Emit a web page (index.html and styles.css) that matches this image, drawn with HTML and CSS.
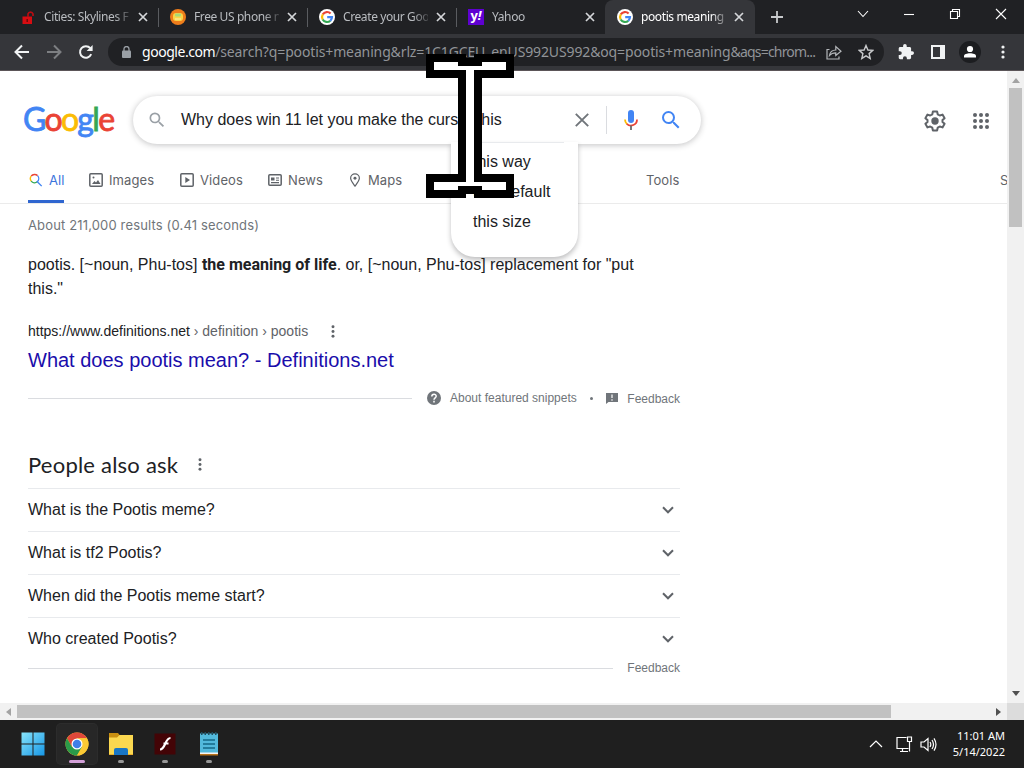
FILE: index.html
```html
<!DOCTYPE html>
<html lang="en">
<head>
    <meta charset="UTF-8">
    <meta name="viewport" content="width=device-width, initial-scale=1.0">
    <title>pootis meaning - Google Search</title>
    <link rel="stylesheet" href="styles.css">
</head>
<body>

<!-- Shared icons -->
<svg class="sprite" width="0" height="0">
    <symbol id="g" viewBox="0 0 16 16">
        <circle cx="8" cy="8" r="8" fill="#fff"/>
        <g fill="none" stroke-width="2.2">
            <path d="M3.8 5.4A5 5 0 0 1 11.6 4.5" stroke="#ea4335"/>
            <path d="M3.7 10.5A5 5 0 0 1 3.8 5.4" stroke="#fbbc05"/>
            <path d="M11.3 11.8A5 5 0 0 1 3.7 10.5" stroke="#34a853"/>
            <path d="M8.2 8.1H13A5 5 0 0 1 11.3 11.8" stroke="#4285f4"/>
        </g>
    </symbol>
    <symbol id="x" viewBox="0 0 10 10">
        <path d="M1 1L9 9M9 1L1 9" fill="none" stroke="currentColor" stroke-width="1.7"/>
    </symbol>
    <symbol id="lens" viewBox="0 0 24 24">
        <path fill="currentColor" d="M15.5 14h-.79l-.28-.27A6.47 6.47 0 0 0 16 9.5 6.5 6.5 0 1 0 9.5 16c1.61 0 3.09-.59 4.23-1.57l.27.28v.79l5 4.99L20.49 19l-4.99-5zm-6 0C7.01 14 5 11.99 5 9.5S7.01 5 9.5 5 14 7.01 14 9.5 11.99 14 9.5 14z"/>
    </symbol>
    <symbol id="dots" viewBox="0 0 4 14">
        <circle cx="2" cy="2" r="1.6" fill="currentColor"/>
        <circle cx="2" cy="7" r="1.6" fill="currentColor"/>
        <circle cx="2" cy="12" r="1.6" fill="currentColor"/>
    </symbol>
    <symbol id="chev" viewBox="0 0 12 8">
        <path d="M1 1.3L6 6.3L11 1.3" fill="none" stroke="currentColor" stroke-width="2"/>
    </symbol>
</svg>

<div class="screen">

    <!-- Tab strip -->
    <div class="tabs">
        <div class="tab tab-1">
            <svg class="fav" viewBox="0 0 16 16"><path d="M2.5 7.5H12V15H2.5Z" fill="#d80d12"/><path d="M8 8V5A2.6 2.6 0 0 1 13 5V7" fill="none" stroke="#b80d12" stroke-width="1.7"/><path d="M7.2 10V13" stroke="#6d0808" stroke-width="1.4"/></svg>
            <span class="tab-title">Cities: Skylines F</span>
            <svg class="close"><use href="#x"/></svg>
        </div>
        <div class="tab">
            <svg class="fav" viewBox="0 0 16 16"><circle cx="8" cy="8" r="8" fill="#ee7d1b"/><rect x="3" y="4" width="10" height="8" rx="3" fill="#f9d548"/><rect x="5" y="4.5" width="6" height="3" rx="1" fill="#a6d978"/><path d="M5 10H11" stroke="#fff1b0"/></svg>
            <span class="tab-title">Free US phone n</span>
            <svg class="close"><use href="#x"/></svg>
        </div>
        <div class="tab">
            <svg class="fav"><use href="#g"/></svg>
            <span class="tab-title">Create your Goo</span>
            <svg class="close"><use href="#x"/></svg>
        </div>
        <div class="tab tab-4">
            <span class="fav yahoo">y<i>!</i></span>
            <span class="tab-title">Yahoo</span>
            <svg class="close"><use href="#x"/></svg>
        </div>
        <div class="tab active">
            <svg class="fav"><use href="#g"/></svg>
            <span class="tab-title">pootis meaning</span>
            <svg class="close"><use href="#x"/></svg>
        </div>
        <svg class="new-tab" viewBox="0 0 12 12"><path d="M6 0V12M0 6H12" stroke="#c8cacc" stroke-width="1.8"/></svg>
        <div class="window-buttons">
            <svg width="12" height="12" viewBox="0 0 12 12"><path d="M1 3L6 8.5L11 3"/></svg>
            <svg width="12" height="12" viewBox="0 0 12 12"><path d="M1 6.5H11"/></svg>
            <svg width="12" height="12" viewBox="0 0 12 12"><path d="M1.5 3.5H8.5V10.5H1.5ZM3.5 3.5V1.5H10.5V8.5H8.5"/></svg>
            <svg width="12" height="12" viewBox="0 0 12 12"><path d="M1 1L11 11M11 1L1 11"/></svg>
        </div>
    </div>

    <!-- Toolbar -->
    <div class="toolbar">
        <svg class="nav-icon" viewBox="0 0 16 16"><path d="M15 8H2M8 1.5L1.5 8L8 14.5" fill="none" stroke="#f1f3f4" stroke-width="2"/></svg>
        <svg class="nav-icon" viewBox="0 0 16 16"><path d="M1 8H14M8 1.5L14.5 8L8 14.5" fill="none" stroke="#7d7f82" stroke-width="2"/></svg>
        <svg class="nav-icon" viewBox="0 0 16 16"><path d="M13.2 10.2A5.8 5.8 0 1 1 12.3 4.2" fill="none" stroke="#f1f3f4" stroke-width="2"/><path d="M14.6 1V7H8.6Z" fill="#f1f3f4"/></svg>
        <div class="address">
            <svg class="lock" viewBox="0 0 9 12"><rect y="4.5" width="9" height="7.5" rx="1" fill="#9aa0a6"/><path d="M2 5V3A2.5 2.5 0 0 1 7 3V5" fill="none" stroke="#9aa0a6" stroke-width="1.3"/></svg>
            <span class="url"><b>google.com</b>/search?q=pootis+meaning&amp;rlz=1C1GCEU_enUS992US992&amp;oq=pootis+meaning<span class="tail">&amp;aqs=chrom...</span></span>
            <svg class="share" viewBox="0 0 16 15"><path d="M3.5 4.5H1V14H13V11.5M3.5 10.5C4 7 6.5 5 9.8 5V1.5L15 6.2L9.8 10.5V7.8C7 7.8 5 8.6 3.5 10.5Z" fill="none" stroke="#b4b7ba" stroke-width="1.2"/></svg>
            <svg class="star" viewBox="0 0 16 16"><path d="M8 1.5L9.9 6L14.8 6.4L11.1 9.6L12.2 14.4L8 11.8L3.8 14.4L4.9 9.6L1.2 6.4L6.1 6Z" fill="none" stroke="#c8cacc" stroke-width="1.4"/></svg>
        </div>
        <svg class="ext" viewBox="1 1 22 22"><path fill="#f1f3f4" d="M20.5 11H19V7c0-1.1-.9-2-2-2h-4V3.5a2.5 2.5 0 0 0-5 0V5H4c-1.1 0-2 .9-2 2v3.8h1.5a2.7 2.7 0 0 1 0 5.4H2V20c0 1.1.9 2 2 2h3.8v-1.5a2.7 2.7 0 0 1 5.4 0V22H17c1.1 0 2-.9 2-2v-4h1.5a2.5 2.5 0 0 0 0-5z"/></svg>
        <svg class="panel" viewBox="0 0 14 14"><path d="M1 1H13V13H1Z" fill="none" stroke="#f1f3f4" stroke-width="2"/><path d="M9 1H13V13H9Z" fill="#f1f3f4"/></svg>
        <svg class="avatar" viewBox="0 0 22 22"><circle cx="11" cy="11" r="11" fill="#1c1d20"/><circle cx="11" cy="8" r="3.1" fill="#fff"/><path d="M5 16.5V15C5 11.3 17 11.3 17 15V16.5Z" fill="#fff"/></svg>
        <svg class="menu-dots"><use href="#dots"/></svg>
    </div>

    <!-- Page and scrollbars -->
    <div class="viewport">
        <div class="page">
            <div class="header">
                <div class="logo"><span class="blue">G</span><span class="red">o</span><span class="yellow">o</span><span class="blue">g</span><span class="green">l</span><span class="red">e</span></div>
                <div class="search">
                    <svg class="search-lens"><use href="#lens"/></svg>
                    <span class="query">Why does win 11 let you make the cursor this</span>
                    <svg class="clear" viewBox="0 0 14 14"><path d="M.8 .8L13.2 13.2M13.2 .8L.8 13.2" stroke="#70757a" stroke-width="1.9"/></svg>
                    <span class="sep"></span>
                    <svg class="mic" viewBox="0 0 14 20"><rect x="4" y="0" width="6" height="13" rx="3" fill="#4285f4"/><path d="M1 9.5A6 6 0 0 0 3 14" fill="none" stroke="#fbbc05" stroke-width="1.8"/><path d="M2.8 13.8A6 6 0 0 0 13 9.5" fill="none" stroke="#ea4335" stroke-width="1.8"/><path d="M7 15.5V20" stroke="#6b6b6b" stroke-width="1.8"/></svg>
                    <svg class="go"><use href="#lens"/></svg>
                    <div class="suggestions">
                        <div>this way</div>
                        <div>this default</div>
                        <div>this size</div>
                    </div>
                </div>
                <svg class="gear" viewBox="0 0 24 24"><path d="M9.9 2.5H14.1L14.7 5.3L16.8 6.5L19.5 5.6L21.6 9.2L19.5 11.1V12.9L21.6 14.8L19.5 18.4L16.8 17.5L14.7 18.7L14.1 21.5H9.9L9.3 18.7L7.2 17.5L4.5 18.4L2.4 14.8L4.5 12.9V11.1L2.4 9.2L4.5 5.6L7.2 6.5L9.3 5.3Z" fill="none" stroke="#5f6368" stroke-width="2" stroke-linejoin="round"/><circle cx="12" cy="12" r="3.7" fill="#5f6368"/></svg>
                <div class="apps"><i></i><i></i><i></i><i></i><i></i><i></i><i></i><i></i><i></i></div>
            </div>

            <div class="filters">
                <a class="filter all">
                    <svg viewBox="0 0 16 16"><g fill="none" stroke-width="1.6"><path d="M2.5 3.5A5 5 0 0 1 9.8 3" stroke="#ea4335"/><path d="M2.5 9.3A5 5 0 0 1 2.5 3.5" stroke="#fbbc05"/><path d="M9.5 10A5 5 0 0 1 2.5 9.3" stroke="#34a853"/><path d="M9.8 3A5 5 0 0 1 9.5 10L14.5 15" stroke="#4285f4"/></g></svg>All
                </a>
                <a class="filter images">
                    <svg viewBox="0 0 14 14"><rect x=".8" y=".8" width="12.4" height="12.4" rx="1" fill="none" stroke="currentColor" stroke-width="1.5"/><path d="M3 11L5.5 8L7 9.5L9 7L11.5 11Z" fill="currentColor"/><circle cx="4.5" cy="4.5" r="1" fill="currentColor"/></svg>Images
                </a>
                <a class="filter videos">
                    <svg viewBox="0 0 14 14"><rect x=".8" y=".8" width="12.4" height="12.4" rx="1" fill="none" stroke="currentColor" stroke-width="1.5"/><path d="M5.3 4L10 7L5.3 10Z" fill="currentColor"/></svg>Videos
                </a>
                <a class="filter news">
                    <svg viewBox="0 0 14 14"><rect x=".8" y="1.7" width="12.4" height="10.6" rx="1" fill="none" stroke="currentColor" stroke-width="1.5"/><path d="M3 4.500H6.5V7.500H3ZM8 4.500H11V5.500H8ZM8 6.700H11V7.700H8ZM3 9H11V10.200H3Z" fill="currentColor"/></svg>News
                </a>
                <a class="filter maps">
                    <svg viewBox="0 0 14 16"><path d="M7 15C4 11 2 8.5 2 6A5 5 0 0 1 12 6C12 8.5 10 11 7 15Z" fill="none" stroke="currentColor" stroke-width="1.4"/><circle cx="7" cy="6" r="1.7" fill="currentColor"/></svg>Maps
                </a>
                <a class="filter tools">Tools</a>
                <a class="filter safe">S</a>
            </div>

            <div class="results">
                <div class="stats">About 211,000 results (0.41 seconds)</div>
                <p class="snippet">pootis. [~noun, Phu-tos] <b>the meaning of life</b>. or, [~noun, Phu-tos] replacement for "put<br>this."</p>
                <div class="cite"><span>https://www.definitions.net</span> › definition › pootis <svg><use href="#dots"/></svg></div>
                <a class="title">What does pootis mean? - Definitions.net</a>
                <div class="snippet-footer">
                    <span class="line"></span>
                    <svg class="help" viewBox="0 0 14 14"><circle cx="7" cy="7" r="7" fill="#70757a"/><path d="M4.8 5.5C4.8 2.5 9.3 2.5 9.2 5.3C9.1 6.8 7 7 7 8.7M7 9.8V11.4" fill="none" stroke="#fff" stroke-width="1.5"/></svg>
                    <span class="about">About featured snippets</span>
                    <span class="bullet"></span>
                    <svg class="flag" viewBox="0 0 12 12"><path d="M0 1H12V10H2.5L0 12Z" fill="#70757a"/><path d="M6 2.5V6M6 7.3V8.7" stroke="#fff" stroke-width="1.2"/></svg>
                    <span class="feedback">Feedback</span>
                </div>

                <h2>People also ask <svg><use href="#dots"/></svg></h2>
                <div class="question">What is the Pootis meme?<svg><use href="#chev"/></svg></div>
                <div class="question">What is tf2 Pootis?<svg><use href="#chev"/></svg></div>
                <div class="question">When did the Pootis meme start?<svg><use href="#chev"/></svg></div>
                <div class="question">Who created Pootis?<svg><use href="#chev"/></svg></div>
                <div class="paa-footer"><span class="line"></span><span class="feedback">Feedback</span></div>
            </div>
        </div>
        <div class="vbar">
            <svg viewBox="0 0 8 5"><path d="M0 5L4 0L8 5Z" fill="#a3a3a3"/></svg>
            <div class="vthumb"></div>
            <svg viewBox="0 0 8 5"><path d="M0 0L4 5L8 0Z" fill="#505050"/></svg>
        </div>
        <div class="hbar">
            <svg viewBox="0 0 5 8"><path d="M5 0L0 4L5 8Z" fill="#a3a3a3"/></svg>
            <div class="hthumb"></div>
            <svg viewBox="0 0 5 8"><path d="M0 0L5 4L0 8Z" fill="#505050"/></svg>
        </div>
        <div class="corner"></div>
    </div>

    <!-- Taskbar -->
    <div class="taskbar">
        <div class="app">
            <svg viewBox="0 0 24 24"><defs><linearGradient id="win" x1="0" y1="0" x2="24" y2="24" gradientUnits="userSpaceOnUse"><stop stop-color="#8ae6fb"/><stop offset="1" stop-color="#1495e6"/></linearGradient></defs><path d="M.5 .5H11.5V11.5H.5ZM12.5 .5H23.5V11.5H12.5ZM.5 12.5H11.5V23.5H.5ZM12.5 12.5H23.5V23.5H12.5Z" fill="url(#win)"/></svg>
        </div>
        <div class="app current">
            <svg viewBox="0 0 24 24"><circle cx="12" cy="12" r="11.5" fill="#fbc934"/><path d="M2.04 6.25A11.5 11.5 0 0 1 21.96 6.25H12L7 14.9Z" fill="#e0483a"/><path d="M2.04 6.25A11.5 11.5 0 0 0 12 23.5L17 14.9L7 14.9Z" fill="#2a9b49"/><path d="M12 23.5L17 14.9A5.8 5.8 0 0 0 12 6.25H21.96A11.5 11.5 0 0 1 12 23.5Z" fill="#fbc934"/><circle cx="12" cy="12" r="5.5" fill="#fff"/><circle cx="12" cy="12" r="4.3" fill="#3f7fe8"/></svg>
        </div>
        <div class="app">
            <svg viewBox="0 0 24 24"><path d="M0 1H9L11 3.5V8H0Z" fill="#c98f11"/><path d="M0 5.5H8L10.5 3H24V23H0Z" fill="#fbd850"/><path d="M5 23V18Q5 16 7 16H17Q19 16 19 18V23Z" fill="#1976c5"/><path d="M0 22.5H5M19 22.5H24" stroke="#eab02e"/></svg>
        </div>
        <div class="app">
            <svg viewBox="0 0 24 24"><rect x="1.5" y="1.5" width="21" height="21" fill="#430406"/><path d="M17.5 6C12 6 12.5 17.5 7 17.5M10.500 11.500H15.500" fill="none" stroke="#fff" stroke-width="2.2"/></svg>
        </div>
        <div class="app">
            <svg viewBox="0 0 24 24"><path d="M3 1.5H21V21H3Z" fill="#52b9dc"/><path d="M3 20.5H21V22H3Z" fill="#f4f4f4"/><path d="M3 22H21V23.5H3Z" fill="#b8731c"/><path d="M6 8H18M6 12H18M6 16H18" stroke="#156886" stroke-width="1.5"/><path d="M4 1.500H20" stroke="#1f4f60" stroke-width="3" stroke-dasharray="1.500 2"/></svg>
        </div>
        <div class="tray">
            <svg width="14" height="8" viewBox="0 0 14 8"><path d="M1 7L7 1L13 7"/></svg>
            <svg width="17" height="17" viewBox="0 0 17 17"><path d="M10.500 1.500H1V12.500H12.500M4 15.500H12M6.500 12.500V15.500M11.500 1H15.500V5.500H11.500ZM13.500 5.500V15.500"/></svg>
            <svg width="17" height="15" viewBox="0 0 17 15"><path d="M1 5H4L8 1.500V13.500L4 10H1ZM10 5Q11.600 7.500 10 10M12 3Q15 7.500 12 12M14 1.300Q18 7.500 14 13.700"/></svg>
            <div class="clock">11:01 AM<br>5/14/2022</div>
        </div>
    </div>

    <!-- Oversized text cursor -->
    <svg class="cursor" width="88" height="144" viewBox="0 0 88 144" shape-rendering="crispEdges">
        <path d="M0 0H40V4H48V0H88V24H56V120H88V144H48V140H40V144H0V120H32V24H0Z" fill="#000"/>
        <path d="M8 8H32V12H56V8H80V16H48V128H80V136H56V132H32V136H8V128H40V16H8Z" fill="#fff"/>
    </svg>
</div>

</body>
</html>
```

FILE: styles.css
```css
* {
    box-sizing: border-box;
}
body {
    margin: 0;
    font-family: "Liberation Sans", Arial, sans-serif;
    color: #202124;
    overflow: hidden;
}
svg {
    display: block;
    flex-shrink: 0;
}
.sprite {
    position: absolute;
}
.screen {
    position: relative;
    width: 1024px;
    height: 768px;
    display: flex;
    flex-direction: column;
}

/* Tab strip */
.tabs {
    height: 34px;
    background-color: #202124;
    display: flex;
    align-items: center;
    font: 12px "Noto Sans", sans-serif;
    color: #b9bcc0;
}
.tab {
    width: 149px;
    height: 34px;
    display: flex;
    align-items: center;
    padding: 0 11px 0 11px;
    position: relative;
}
.tab-1 {
    width: 159px;
    padding-left: 20px;
}
.tab-4 {
    width: 148px;
    padding-right: 10px;
}
.tab + .tab:not(.active)::before {
    content: "";
    position: absolute;
    left: -1px;
    top: 8px;
    width: 1px;
    height: 19px;
    background-color: #5a5c60;
}
.tab.active {
    background-color: #35363a;
    border-radius: 8px 8px 0 0;
    color: #fff;
    width: 150px;
    padding-left: 12px;
}
.fav {
    width: 16px;
    height: 16px;
    flex-shrink: 0;
}
.yahoo {
    background-color: #5f01d1;
    color: #fff;
    font: bold 13px/13px "Open Sans", sans-serif;
    text-align: center;
}
.tab-title {
    flex: 1;
    margin: 0 8px 2px 8px;
    overflow: hidden;
    white-space: nowrap;
    letter-spacing: -0.4px;
    -webkit-mask-image: linear-gradient(to right, #000 82%, rgba(0, 0, 0, 0.2));
    mask-image: linear-gradient(to right, #000 82%, rgba(0, 0, 0, 0.2));
}
.close {
    width: 10px;
    height: 10px;
    color: #d5d7da;
}
.new-tab {
    width: 12px;
    height: 12px;
    margin-left: 16px;
}
.window-buttons {
    margin-left: auto;
    margin-top: -6px;
    padding-right: 17px;
    display: flex;
    gap: 34px;
}
.window-buttons path {
    fill: none;
    stroke: #fff;
    stroke-width: 1.1;
}

/* Toolbar */
.toolbar {
    height: 37px;
    background-color: #35363a;
    border-bottom: 1px solid #5b5558;
    display: flex;
    align-items: center;
    padding-left: 14px;
}
.nav-icon {
    width: 16px;
    height: 16px;
    margin-right: 16px;
}
.address {
    width: 776px;
    height: 28px;
    margin-left: -2px;
    border-radius: 14px;
    background-color: #202124;
    display: flex;
    align-items: center;
    padding-left: 14px;
}
.lock {
    width: 9px;
    height: 12px;
}
.url {
    width: 675px;
    margin: 0 0 1px 11px;
    font: 14px "Noto Sans", sans-serif;
    letter-spacing: -0.13px;
    white-space: nowrap;
    color: #919498;
}
.url b {
    font-weight: 400;
    letter-spacing: -0.45px;
    color: #fff;
}
.tail {
    letter-spacing: -0.8px;
}
.share {
    width: 16px;
    height: 15px;
    margin-left: 9px;
}
.star {
    width: 16px;
    height: 16px;
    margin-left: 16px;
}
.ext {
    width: 16px;
    height: 16px;
    margin-left: 14px;
}
.panel {
    width: 14px;
    height: 14px;
    margin-left: 17px;
}
.avatar {
    width: 22px;
    height: 22px;
    margin-left: 14px;
}
.menu-dots {
    width: 4px;
    height: 14px;
    margin-left: 20px;
    color: #f1f3f4;
}

/* Page area */
.viewport {
    height: 649px;
    display: grid;
    grid-template-columns: 1007px 17px;
    grid-template-rows: 632px 17px;
}
.page {
    background-color: #fff;
    overflow: hidden;
}
.header {
    height: 73px;
    display: flex;
    align-items: flex-start;
    padding: 25px 0 0 23px;
}
.logo {
    width: 110px;
    font: 32px/46px Lato, sans-serif;
    letter-spacing: -1.7px;
    -webkit-text-stroke: 0.8px;
}
.blue { color: #4285f4; }
.red { color: #ea4335; }
.yellow { color: #fbbc05; }
.green { color: #34a853; }
.search {
    position: relative;
    width: 568px;
    height: 48px;
    border-radius: 24px;
    box-shadow: 0 1px 6px rgba(32, 33, 36, 0.28);
    display: flex;
    align-items: center;
    padding-left: 14px;
    font-size: 16px;
}
.search-lens {
    width: 20px;
    height: 20px;
    color: #9aa0a6;
}
.query {
    width: 380px;
    margin-left: 14px;
    white-space: nowrap;
}
.clear {
    width: 14px;
    height: 14px;
    margin-left: 14px;
}
.sep {
    width: 1px;
    height: 28px;
    margin-left: 17px;
    background-color: #dadce0;
}
.mic {
    width: 14px;
    height: 20px;
    margin-left: 17px;
}
.go {
    width: 24px;
    height: 24px;
    margin-left: 21px;
    color: #4285f4;
}
.suggestions {
    position: absolute;
    left: 318px;
    top: 46px;
    width: 127px;
    height: 115px;
    padding: 5px 0 0 22px;
    background-color: #fff;
    border-radius: 0 0 24px 24px;
    box-shadow: 0 3px 5px rgba(32, 33, 36, 0.28);
    line-height: 30px;
    z-index: 1;
}
.suggestions::before {
    content: "";
    position: absolute;
    left: 29px;
    right: 14px;
    top: 0;
    height: 1px;
    background-color: #e8eaed;
}
.gear {
    width: 24px;
    height: 24px;
    margin: 13px 0 0 222px;
}
.apps {
    display: grid;
    grid-template-columns: repeat(3, 4px);
    gap: 2px;
    margin: 17px 0 0 26px;
}
.apps i {
    width: 4px;
    height: 4px;
    border-radius: 50%;
    background-color: #5f6368;
}

.filters {
    height: 60px;
    border-bottom: 1px solid #ebebeb;
    display: flex;
    padding-left: 28px;
    font: 13px Inter, sans-serif;
    letter-spacing: 0.1px;
    color: #5f6368;
}
.filter {
    flex-shrink: 0;
    height: 59px;
    display: flex;
    align-items: center;
    padding-top: 13px;
    white-space: nowrap;
}
.filter svg {
    width: 14px;
    height: 14px;
    margin-right: 6px;
}
.all {
    width: 36px;
    color: #3b74dc;
    border-bottom: 3px solid #2f66d0;
    padding-top: 16px;
}
.filter.all svg {
    margin-left: 1px;
}
.images { margin-left: 25px; width: 91px; }
.videos { width: 88px; }
.news { width: 80px; }
.maps { width: 298px; }
.tools { width: 354px; }

/* Results */
.results {
    width: 652px;
    margin-left: 28px;
}
.stats {
    height: 48px;
    padding-top: 11px;
    font: 13px/20px Inter, sans-serif;
    letter-spacing: 0.15px;
    color: #70757a;
}
.snippet {
    margin: 0;
    padding-top: 1px;
    font-size: 16px;
    line-height: 24px;
    white-space: nowrap;
}
.snippet b {
    font-family: Roboto, sans-serif;
}
.cite {
    display: flex;
    align-items: center;
    height: 20px;
    margin-top: 20px;
    font-size: 14px;
    color: #5f6368;
    white-space: pre;
}
.cite span {
    color: #202124;
}
.cite svg {
    width: 4px;
    height: 13px;
    margin-left: 19px;
}
.title {
    display: block;
    margin-top: 6px;
    font-size: 20px;
    line-height: 26px;
    color: #1a0dab;
}
.snippet-footer {
    display: flex;
    align-items: center;
    height: 20px;
    margin-top: 15px;
    font-size: 12px;
    color: #70757a;
}
.snippet-footer .line {
    width: 384px;
}
.line {
    height: 1px;
    background-color: #dadce0;
}
.help {
    width: 14px;
    height: 14px;
    margin-left: 15px;
}
.about {
    width: 127px;
    margin-left: 9px;
}
.bullet {
    width: 3px;
    height: 3px;
    margin-left: 13px;
    border-radius: 50%;
    background-color: #70757a;
}
.flag {
    width: 12px;
    height: 12px;
    margin-left: 13px;
}
.feedback {
    margin-left: auto;
}
.snippet-footer .feedback {
    padding-top: 1px;
}
h2 {
    display: flex;
    align-items: center;
    height: 28px;
    margin: 42px 0 10px;
    font: 22px Lato, sans-serif;
    letter-spacing: 0.22px;
}
h2 svg {
    width: 4px;
    height: 13px;
    margin-left: 20px;
    color: #5f6368;
}
.question {
    display: flex;
    align-items: center;
    justify-content: space-between;
    height: 43px;
    border-top: 1px solid #e8eaed;
    padding-right: 6px;
    font-size: 16px;
}
.question svg {
    width: 12px;
    height: 8px;
    color: #5f6368;
}
.paa-footer {
    display: flex;
    align-items: center;
    height: 16px;
    font-size: 12px;
    color: #70757a;
}
.paa-footer .line {
    width: 585px;
}

/* Scrollbars */
.vbar {
    background-color: #f1f1f1;
    display: flex;
    flex-direction: column;
    align-items: center;
    padding: 7px 0;
}
.vbar svg {
    width: 8px;
    height: 5px;
}
.vthumb {
    width: 13px;
    height: 139px;
    margin: 5px 0 auto;
    background-color: #c1c1c1;
}
.hbar {
    background-color: #f1f1f1;
    display: flex;
    align-items: center;
    padding: 0 6px;
}
.hbar svg {
    width: 5px;
    height: 8px;
}
.hthumb {
    width: 874px;
    height: 13px;
    margin: 0 auto 0 6px;
    background-color: #c1c1c1;
}
.corner {
    background-color: #dcdcdc;
}

/* Taskbar */
.taskbar {
    height: 48px;
    background-color: #1f1f1f;
    display: flex;
    align-items: center;
    gap: 4px;
    padding: 0 19px 0 13px;
}
.app {
    position: relative;
    width: 40px;
    height: 40px;
    display: flex;
    align-items: center;
    justify-content: center;
}
.app svg {
    width: 24px;
    height: 24px;
}
.app:not(:first-child)::after {
    content: "";
    position: absolute;
    left: 17px;
    bottom: 1px;
    width: 6px;
    height: 3px;
    border-radius: 2px;
    background-color: #989898;
}
.current {
    background-color: #272727;
    border-radius: 4px;
    box-shadow: 0 0 0 1px #2c2c2c;
}
.app.current::after {
    left: 12px;
    width: 16px;
    background-color: #d3a0d8;
}
.tray {
    margin-left: auto;
    display: flex;
    align-items: center;
}
.tray path {
    fill: none;
    stroke: #fff;
    stroke-width: 1.2;
}
.tray svg {
    margin-right: 13px;
}
.tray svg + svg {
    margin-right: 7px;
}
.clock {
    width: 61px;
    font: 11px/16px "Noto Sans", sans-serif;
    letter-spacing: 0;
    white-space: nowrap;
    text-align: right;
    color: #fff;
}

.cursor {
    position: absolute;
    left: 426px;
    top: 54px;
    z-index: 2;
}
```
